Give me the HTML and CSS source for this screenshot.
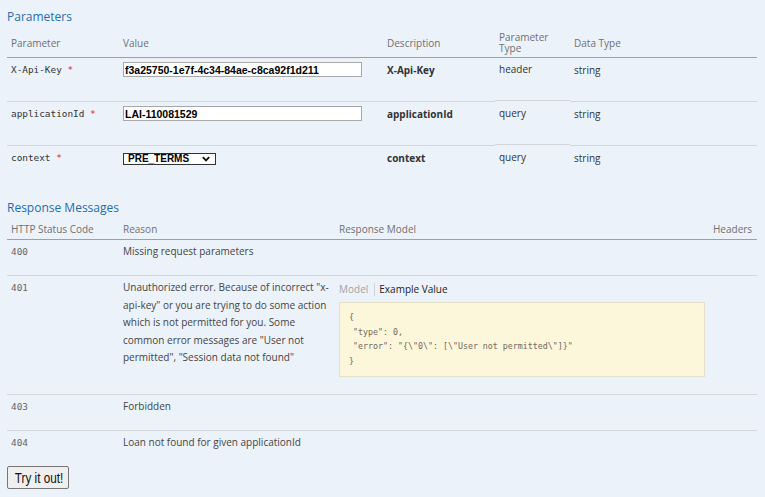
FILE: index.html
```html
<!DOCTYPE html>
<html>
<head>
<meta charset="utf-8">
<title>Operation</title>
<link rel="stylesheet" href="styles.css">
</head>
<body>
<div class="content">
  <h4 class="heading">Parameters</h4>
  <table class="tbl params">
    <colgroup>
      <col class="p1"><col class="p2"><col class="p3"><col class="p4"><col class="p5">
    </colgroup>
    <thead>
      <tr><th>Parameter</th><th>Value</th><th>Description</th><th>Parameter<br>Type</th><th>Data Type</th></tr>
    </thead>
    <tbody>
      <tr>
        <td class="code">X-Api-Key <span class="req">*</span></td>
        <td><input class="inp" type="text" value="f3a25750-1e7f-4c34-84ae-c8ca92f1d211"></td>
        <td class="desc">X-Api-Key</td>
        <td class="ptype">header</td>
        <td>string</td>
      </tr>
      <tr>
        <td class="code">applicationId <span class="req">*</span></td>
        <td><input class="inp" type="text" value="LAI-110081529"></td>
        <td class="desc">applicationId</td>
        <td class="ptype">query</td>
        <td>string</td>
      </tr>
      <tr>
        <td class="code">context <span class="req">*</span></td>
        <td>
          <span class="selwrap">
            <select class="sel"><option>PRE_TERMS</option></select>
            <svg class="chev" width="8" height="6" viewBox="0 0 8 6"><path d="M0.8 1.2 L4 4.4 L7.2 1.2" fill="none" stroke="#111" stroke-width="1.8"/></svg>
          </span>
        </td>
        <td class="desc">context</td>
        <td class="ptype">query</td>
        <td>string</td>
      </tr>
    </tbody>
  </table>

  <h4 class="heading heading2">Response Messages</h4>
  <table class="tbl resp">
    <colgroup>
      <col class="r1"><col class="r2"><col class="r3"><col class="r4">
    </colgroup>
    <thead>
      <tr><th>HTTP Status Code</th><th>Reason</th><th>Response Model</th><th>Headers</th></tr>
    </thead>
    <tbody>
      <tr class="short">
        <td class="code status">400</td>
        <td class="reason">Missing request parameters</td>
        <td></td><td></td>
      </tr>
      <tr class="tall">
        <td class="code status">401</td>
        <td class="reason">Unauthorized error. Because of incorrect "x-api-key" or you are trying to do some action which is not permitted for you. Some common error messages are "User not permitted", "Session data not found"</td>
        <td>
          <div class="tabs"><span class="tab tab-off">Model</span><span class="tab tab-on">Example Value</span></div>
          <div class="sample"><div class="ln">{</div><div class="ln ind">"type": 0,</div><div class="ln ind">"error": "{\"0\": [\"User not permitted\"]}"</div><div class="ln">}</div></div>
        </td>
        <td></td>
      </tr>
      <tr class="short">
        <td class="code status">403</td>
        <td class="reason">Forbidden</td>
        <td></td><td></td>
      </tr>
      <tr class="short">
        <td class="code status">404</td>
        <td class="reason">Loan not found for given applicationId</td>
        <td></td><td></td>
      </tr>
    </tbody>
  </table>
  <button class="try" type="button"><span class="try-txt">Try it out!</span></button>
</div>
</body>
</html>
```

FILE: styles.css
```css
html, body {
  margin: 0;
  padding: 0;
  background: #ecf2fa;
}
.content {
  padding: 0 8px 0 7px;
  font-family: "Open Sans", "Noto Sans", sans-serif;
  font-size: 10px;
  color: #333;
}
.heading {
  margin: 0;
  padding-top: 8px;
  line-height: 18px;
  font-size: 12px;
  font-weight: normal;
  color: #1f6cb0;
}
.heading2 {
  margin-top: 10px;
  padding-top: 0;
}
.tbl {
  width: 750px;
  table-layout: fixed;
  border-collapse: separate;
  border-spacing: 0;
}
.p1 { width: 112px; }
.p2 { width: 264px; }
.p3 { width: 112px; }
.p4 { width: 75px; }
.p5 { width: 187px; }
.r1 { width: 112px; }
.r2 { width: 216px; }
.r3 { width: 374px; }
.r4 { width: 48px; }

.tbl th {
  text-align: left;
  font-weight: normal;
  color: #707070;
  font-size: 10px;
  line-height: 11px;
  padding: 6px 0 3px 4px;
  vertical-align: middle;
  border-bottom: 1px solid #9da0a5;
}
.resp th {
  line-height: 13px;
}
.tbl td {
  padding: 4px 0 0 4px;
  height: 39px;
  vertical-align: top;
  line-height: 16px;
}
.tbl tbody tr + tr td {
  border-top: 1px solid #d3d7dc;
}
.code {
  font-family: "DejaVu Sans Mono", monospace;
  font-size: 9.4px;
  color: #333;
}
.req {
  color: #d22;
}
.desc {
  font-weight: bold;
}
.ptype {
  position: relative;
  top: -1px;
}
.inp {
  display: block;
  box-sizing: border-box;
  width: 239px;
  height: 15px;
  margin: 0;
  padding: 0 1px;
  border: 1px solid #a8a8a8;
  background: #fff;
  font-family: "Liberation Sans", Arial, sans-serif;
  font-weight: bold;
  font-size: 10.5px;
  color: #000;
  outline: none;
}
.selwrap {
  position: relative;
  display: inline-block;
  margin-top: 1px;
}
.sel {
  display: block;
  box-sizing: border-box;
  width: 93px;
  height: 12px;
  margin: 0;
  padding: 0 0 0 4px;
  border: 1px solid #333;
  border-radius: 0;
  background: #fff;
  -webkit-appearance: none;
  appearance: none;
  font-family: "Liberation Sans", Arial, sans-serif;
  font-weight: bold;
  font-size: 10px;
  line-height: 10px;
  color: #000;
  outline: none;
}
.chev {
  position: absolute;
  left: 79px;
  top: 3px;
}

.resp td {
  padding-top: 3px;
  line-height: 17.5px;
}
.resp .short td {
  height: 32px;
}
.resp .tall td {
  height: 115px;
}
.status {
  color: #666;
}
.reason {
  color: #444;
  padding-right: 6px;
}
.tabs {
  padding-top: 1px;
  line-height: 18px;
  display: flex;
  align-items: center;
}
.tab-off {
  color: #a3a3a3;
  padding-right: 6px;
  border-right: 1px solid #d0d4d9;
  line-height: 13px;
}
.tab-on {
  color: #222;
  padding-left: 4px;
}
.sample {
  margin-top: 4px;
  box-sizing: border-box;
  width: 366px;
  border: 1px solid #e5e0c6;
  background: #fcf6db;
  padding: 7px 8px 8px 9px;
  font-family: "DejaVu Sans Mono", monospace;
  font-size: 8.3px;
  line-height: 14.5px;
  color: #75665a;
  white-space: pre;
}
.ind {
  padding-left: 4px;
}
.try {
  display: block;
  box-sizing: border-box;
  width: 62px;
  height: 23px;
  margin: 0;
  padding: 0;
  border: 1px solid #767676;
  border-radius: 2px;
  background: #efefef;
  font-family: "Liberation Sans", Arial, sans-serif;
  font-size: 15px;
  color: #111;
  overflow: visible;
  white-space: nowrap;
}
.try-txt {
  display: inline-block;
  transform: scaleX(0.78);
  transform-origin: center;
}
```
